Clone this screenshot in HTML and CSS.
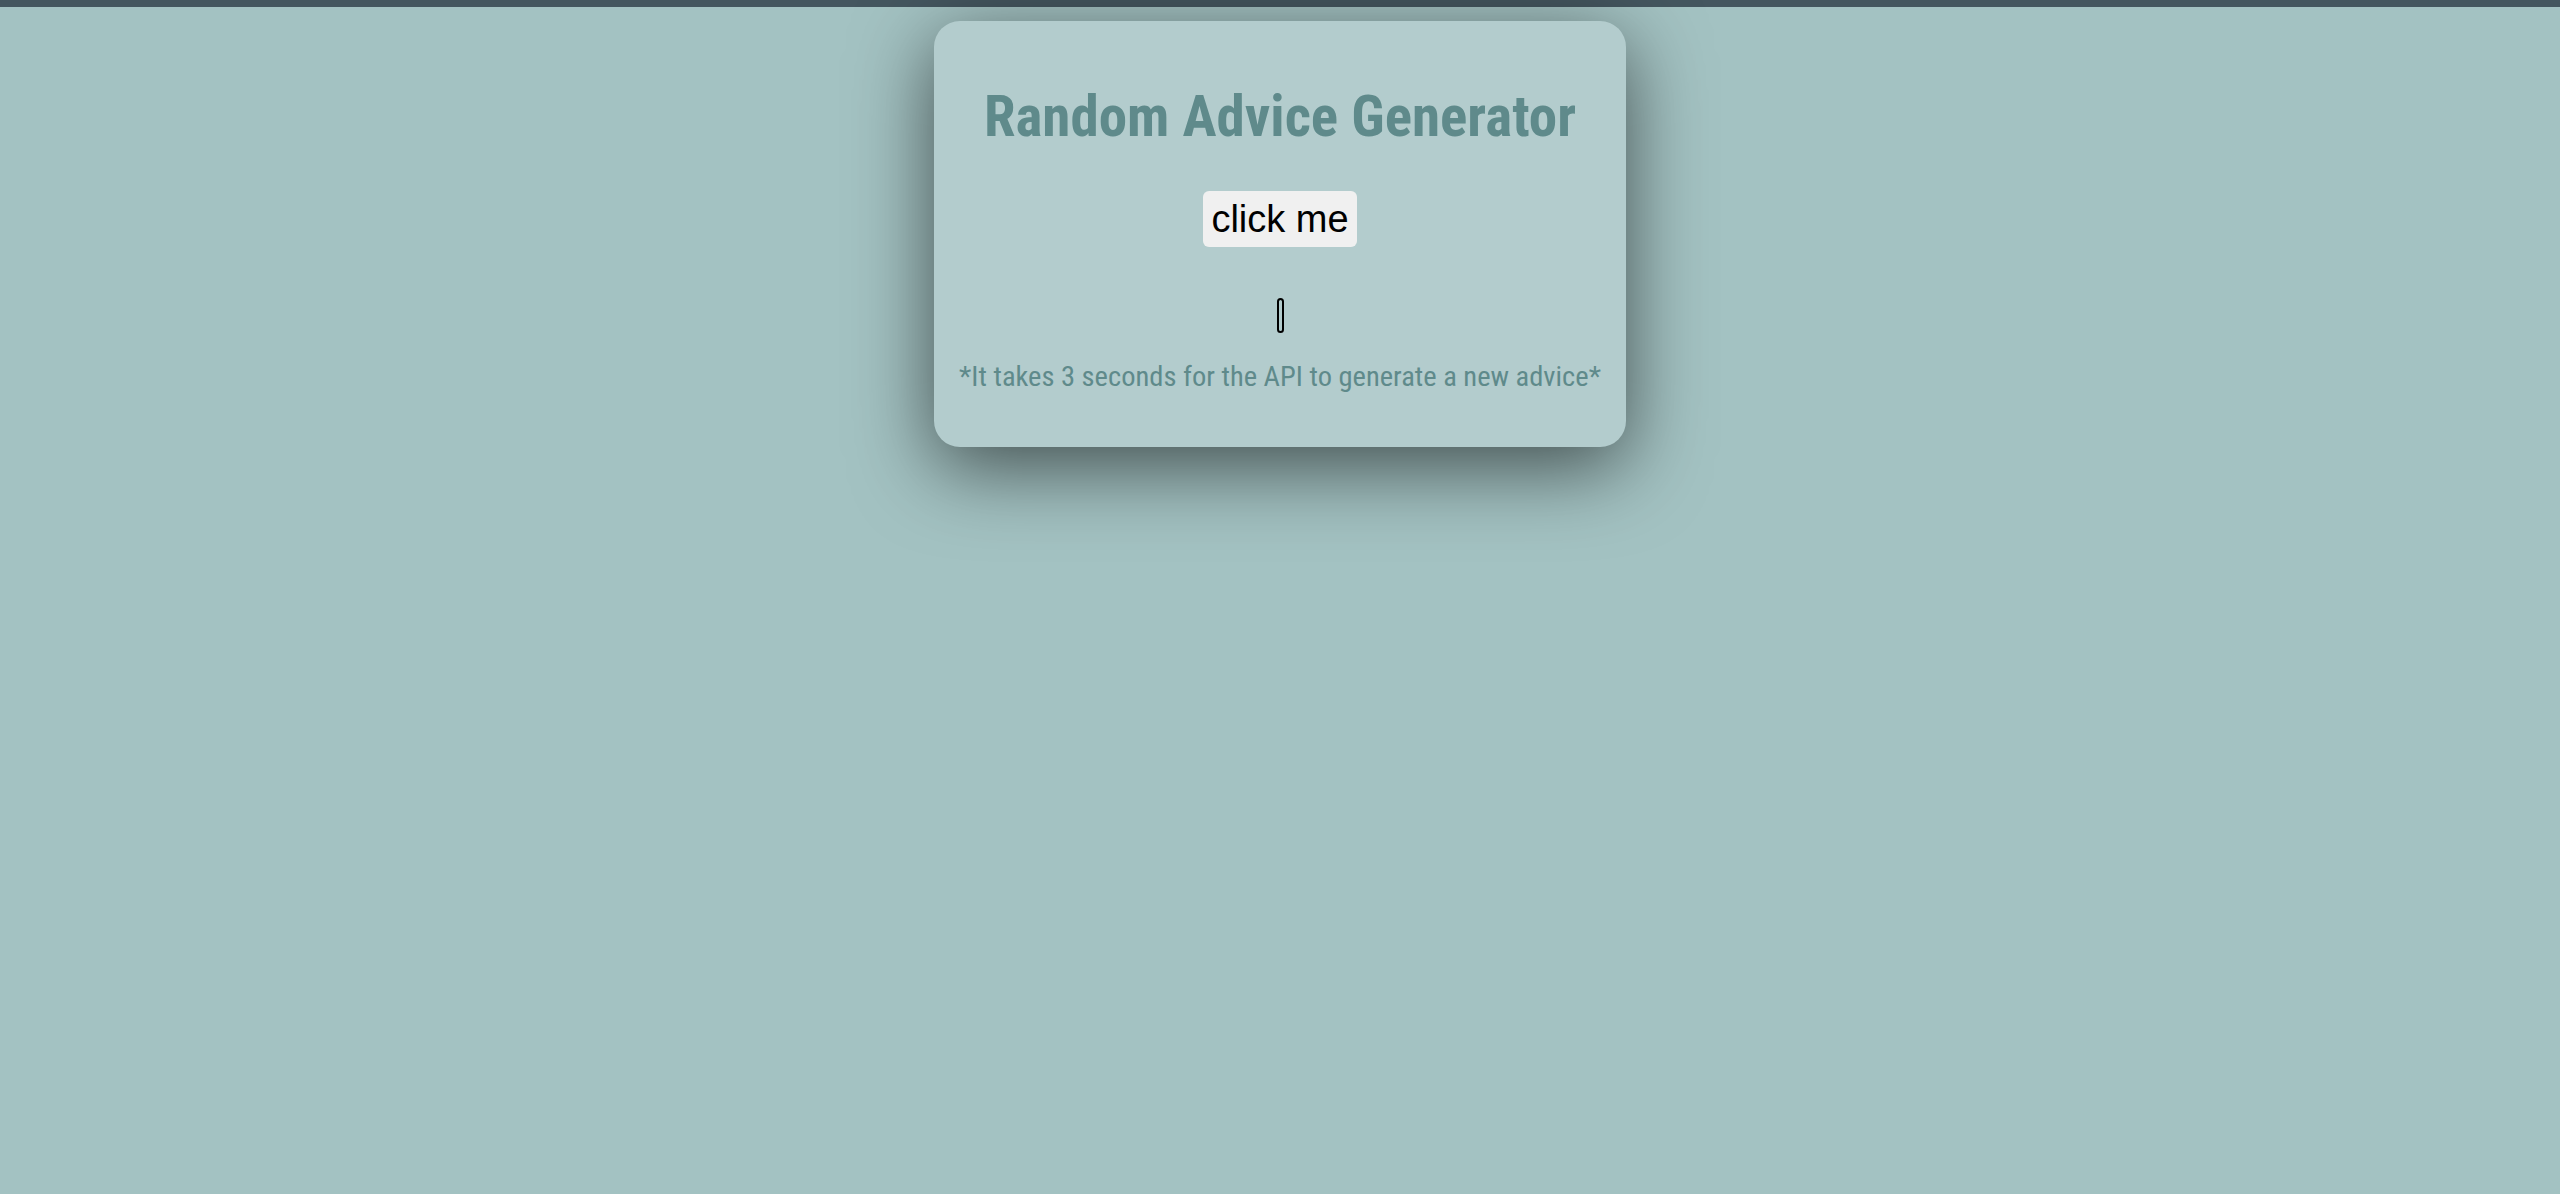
FILE: index.html
```html
<!DOCTYPE html>
<html lang="en">
<head>
<meta charset="utf-8">
<title>Random Advice Generator</title>
<link rel="stylesheet" href="styles.css">
</head>
<body>
<div class="topbar"></div>
<main class="card">
  <h1 class="title">Random Advice Generator</h1>
  <button class="btn" type="button">click me</button>
  <div class="advice"></div>
  <p class="note">*It takes 3 seconds for the API to generate a new advice*</p>
</main>
</body>
</html>
```

FILE: styles.css
```css
html {
  background: #a3c2c2;
}
body {
  margin: 0;
  padding: 0;
  min-height: 100vh;
  font-family: Roboto, "Open Sans", sans-serif;
  font-stretch: 75%;
}
.topbar {
  height: 7px;
  background: #44565f;
}
.card {
  box-sizing: border-box;
  width: 692px;
  height: 426px;
  margin: 14px auto 0;
  padding-top: 67px;
  background: #b3cccd;
  border-radius: 26px;
  box-shadow: 0 20px 80px rgba(0, 0, 0, 0.6);
  display: flex;
  flex-direction: column;
  align-items: center;
}
.title {
  margin: 0;
  font-size: 57px;
  line-height: 57px;
  font-weight: 700;
  color: #5f8a8b;
  white-space: nowrap;
}
.btn {
  margin-top: 46px;
  height: 56px;
  padding: 0 8px;
  border: none;
  border-radius: 6px;
  background: #f0f0f0;
  color: #000;
  font-family: "Liberation Sans", Arial, sans-serif;
  font-stretch: normal;
  font-size: 38px;
  line-height: 1;
}
.advice {
  margin-top: 51px;
  box-sizing: border-box;
  width: 7px;
  height: 35px;
  border: 2px solid #000;
  border-radius: 4px;
}
.note {
  margin: 30px 0 0;
  font-size: 28.5px;
  line-height: 28.5px;
  color: #5f8a8b;
  white-space: nowrap;
}
```
